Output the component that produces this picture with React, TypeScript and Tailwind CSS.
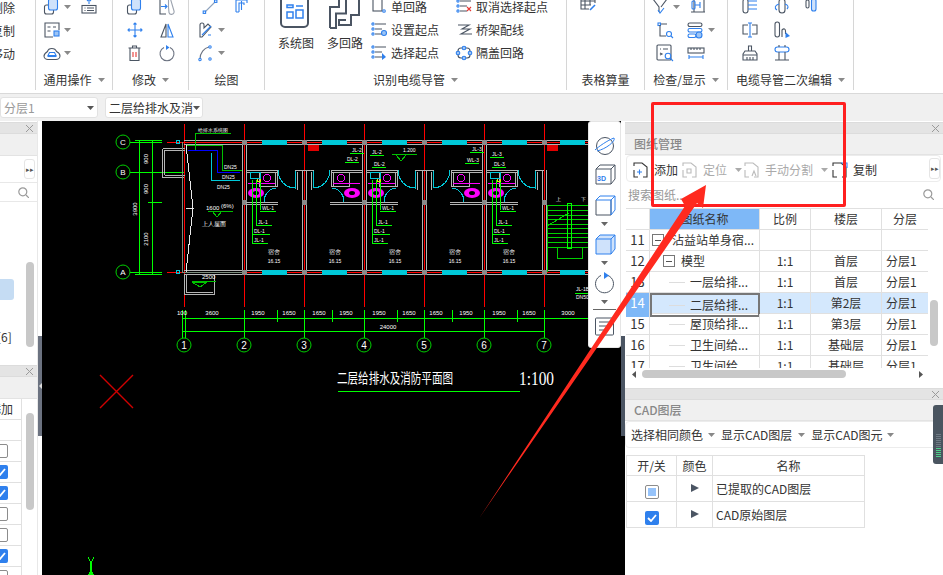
import type { ReactNode } from 'react'

const DARK = '#4b5563'
const BLUE = '#2f80ed'
const GREEN = '#00ff00'
const WALL = '#b4b4b4'
const CYAN = '#00c8d8'
const PINK = '#ff00ff'

function Ic({ w = 18, h = 18, children }: { w?: number; h?: number; children: ReactNode }) {
  return (
    <svg width={w} height={h} viewBox={`0 0 ${w} ${h}`} fill="none" stroke={DARK} strokeWidth={1.1} className="shrink-0">
      {children}
    </svg>
  )
}

function Caret({ color = '#8a8a8a' }: { color?: string }) {
  return (
    <svg width="7" height="4" viewBox="0 0 7 4" className="shrink-0">
      <path d="M0 0h7L3.5 4z" fill={color} />
    </svg>
  )
}

const CopyIcon = () => (
  <Ic>
    <rect x="1.500" y="7" width="9" height="9" rx="2" />
    <rect x="5.500" y="1" width="9" height="11" rx="2" fill="#cfe2fb" stroke={BLUE} />
  </Ic>
)
const UploadIcon = () => (
  <Ic>
    <rect x="2" y="7.500" width="14" height="7.500" />
    <path d="M4.500 10h1M4.500 12.500h1M7 10h7M7 12.500h7" />
    <path d="M9 1v5M7 3l2-2 2 2" stroke={BLUE} />
  </Ic>
)
const FormIcon = () => (
  <Ic>
    <path d="M16 9V2H2v14h8" />
    <path d="M4.500 6h3M10 6h3M4.500 10h3" />
    <rect x="11" y="10" width="5" height="5" fill="#9cc4f5" stroke={BLUE} />
  </Ic>
)
const CloudIcon = () => (
  <Ic>
    <path d="M1 12c0-2 2-3.500 3.500-4.500C5.500 3.500 12 3.500 13.500 7.500c2 1 3.500 2.500 3.500 4.500s-2 3.500-4 3.500H5C3 15.500 1 14 1 12z" />
    <path d="M6.500 8.500h5l1.500 3h-8z" stroke={BLUE} />
    <path d="M4.500 12.500h9" stroke={BLUE} />
  </Ic>
)
const ExportDocIcon = () => (
  <Ic>
    <path d="M9 1H2v15h6" />
    <path d="M3 8.500h6M7 6.500l2 2-2 2" stroke={BLUE} />
    <path d="M10.500 1h2l3.500 12a2.500 2.500 0 0 1-5 1.500L10.500 9z" stroke="#9ca3af" />
  </Ic>
)
const MoveIcon = () => (
  <Ic>
    <path d="M9 3v12M3 9h12M7.500 3.500 9 2l1.500 1.500M7.500 14.500 9 16l1.500-1.500M3.500 7.500 2 9l1.500 1.500M14.500 7.500 16 9l-1.500 1.500" stroke={BLUE} />
  </Ic>
)
const MirrorIcon = () => (
  <Ic>
    <path d="M8 3v13H3z" />
    <path d="M10 3v13h5z" stroke={BLUE} />
  </Ic>
)
const TrashIcon = () => (
  <Ic>
    <path d="M2.500 4h12M6.500 4V2h4v2M4 4v12.500h9V4" />
    <path d="M7 8v5M10 8v5" stroke="#e53935" />
  </Ic>
)
const RotateIcon = () => (
  <Ic>
    <path d="M12 3.500a7 7 0 1 1-6 0" stroke="#6b7280" />
    <path d="M8 1v5l3.500-2.500z" fill={BLUE} stroke="none" />
  </Ic>
)
const LineIcon = () => (
  <Ic>
    <path d="M4 14 14 4" stroke="#8fa3bd" />
    <rect x="2.200" y="13" width="2.400" height="2.400" stroke={BLUE} />
    <rect x="13.500" y="2" width="2.400" height="2.400" stroke={BLUE} />
  </Ic>
)
const PipeIcon = () => (
  <Ic>
    <path d="M3 14V2h11v3M6 14V5h5v2M3 14h3M8.500 12V3" stroke={BLUE} />
  </Ic>
)
const PencilIcon = () => (
  <Ic>
    <path d="M3 4v12h2L14 6 11 3 7 7V4a2 2 0 0 0-4 0z" stroke={DARK} />
    <path d="M5 14 14 5M11 14h3" stroke={BLUE} />
  </Ic>
)
const ArcIcon = () => (
  <Ic>
    <path d="M3 15C3 9 7 4 12 3" stroke="#6b7280" />
    <circle cx="3" cy="15.500" r="1.200" stroke={BLUE} />
    <circle cx="13" cy="3" r="1.200" stroke={BLUE} />
    <circle cx="13" cy="15" r="1.200" stroke={BLUE} />
  </Ic>
)
const LoopIcon = () => (
  <Ic>
    <rect x="3" y="1" width="9" height="12" />
    <circle cx="14" cy="13" r="1.300" stroke={BLUE} />
  </Ic>
)
const ListDotIcon = ({ mark }: { mark: ReactNode }) => (
  <Ic>
    <circle cx="3" cy="3" r="1.100" stroke={BLUE} />
    <circle cx="3" cy="8" r="1.100" stroke={BLUE} />
    <circle cx="3" cy="13" r="1.100" stroke={BLUE} />
    <path d="M5 3h11M5 8h7M5 13h7" />
    {mark}
  </Ic>
)
const CancelIcon = () => <ListDotIcon mark={<path d="m12 9 4 4m0-4-4 4" stroke="#e53935" />} />
const SetIcon = () => <ListDotIcon mark={<circle cx="14" cy="12" r="2.500" fill="#9cc4f5" stroke={BLUE} />} />
const PickIcon = () => <ListDotIcon mark={<path d="M12 9v7l4-3z" fill={BLUE} stroke="none" />} />
const TrayIcon = () => (
  <Ic>
    <path d="M3 4h11l-7 4h8l-9 5h11" />
  </Ic>
)
const RingIcon = () => (
  <Ic>
    <rect x="3" y="4" width="12" height="10" rx="3" />
    <circle cx="3" cy="9" r="1.800" fill="#9cc4f5" stroke={BLUE} />
    <circle cx="15" cy="9" r="1.800" fill="#9cc4f5" stroke={BLUE} />
    <circle cx="9" cy="14" r="1.800" fill="#9cc4f5" stroke={BLUE} />
    <circle cx="9" cy="4" r="1.800" fill="#9cc4f5" stroke={BLUE} />
  </Ic>
)
const TablePenIcon = () => (
  <Ic>
    <path d="M2 1v12h8M2 5h14M2 9h10M6 1v12M11 1v8M16 1v6" />
    <path d="m11 14 5-5" stroke={BLUE} strokeWidth={1.600} />
  </Ic>
)
const FunnelIcon = () => (
  <Ic>
    <path d="M1 1l6 8v5M15 1l-6 8" />
    <path d="m6 12 2 3 4-5" stroke={BLUE} />
  </Ic>
)
const SheetIcon = () => (
  <Ic>
    <path d="M2 14h14M15 14V1M2 14h3V1" />
    <rect x="3" y="3" width="3" height="8" rx="1" stroke={BLUE} />
    <path d="M6 7h5M11 4v6" stroke={BLUE} />
  </Ic>
)
const CornerSearchIcon = () => (
  <Ic>
    <rect x="2" y="2" width="2.500" height="2.500" stroke={BLUE} />
    <path d="M4 4v11h6M5 3h6" />
    <circle cx="13" cy="13" r="2.500" stroke={BLUE} />
    <path d="m15 15 2 2" stroke={BLUE} />
  </Ic>
)
const BarsClockIcon = () => (
  <Ic>
    <rect x="1" y="2" width="14" height="3.500" rx="1.700" />
    <rect x="1" y="7.500" width="14" height="3.500" rx="1.700" stroke={BLUE} />
    <rect x="1" y="13" width="8" height="3.500" rx="1.700" stroke={BLUE} />
    <circle cx="12" cy="14" r="3" fill="#9cc4f5" stroke={BLUE} />
  </Ic>
)
const PanelSearchIcon = () => (
  <Ic>
    <rect x="1" y="1" width="14" height="15" rx="1" />
    <path d="M4 5h1M7 5h5M4 9l2 1-2 1" />
    <circle cx="12" cy="12" r="2.800" fill="#fff" stroke={BLUE} />
    <path d="m14 14 3 3" stroke={BLUE} />
  </Ic>
)
const RulerIcon = () => (
  <Ic>
    <rect x="1" y="4" width="16" height="5" />
    <path d="M4 4v2M7 4v2M10 4v2M13 4v2" />
    <path d="M2 13h14M2 11v4M16 11v4" stroke={BLUE} />
  </Ic>
)
const TubeLinesIcon = () => (
  <Ic>
    <rect x="2" y="1" width="5" height="14" rx="2.500" />
    <path d="M7 3h9M7 7h9M7 11h9" stroke={BLUE} />
  </Ic>
)
const TubeRotateIcon = () => (
  <Ic>
    <rect x="6" y="1" width="6" height="14" rx="3" />
    <path d="M6 6C2 7 1 10 4 12M12 6c3 1 4 3 2 5" stroke={BLUE} />
  </Ic>
)
const TwinBarIcon = () => (
  <Ic w={12}>
    <rect x="1" y="2" width="3" height="8" rx="1.500" />
    <rect x="6.500" y="1" width="4.500" height="12" rx="2" fill="#cfe2fb" stroke={BLUE} />
  </Ic>
)
const CutIcon = () => (
  <Ic>
    <path d="M7 4H2v9h5M11 4h5v9h-5" />
    <path d="M9 2v14M7 2h4M7 16h4" stroke={BLUE} />
  </Ic>
)
const TubeSearchIcon = () => (
  <Ic>
    <rect x="2" y="1" width="4.500" height="15" rx="2.200" />
    <path d="M9 16V9c2-2 3.500-1 3.500 1v3" />
    <path d="M12.500 11v6l4.500-2z" fill={BLUE} stroke="none" />
  </Ic>
)
const BrushIcon = () => (
  <Ic>
    <path d="M7.500 7V2h3v5M2 10l2-3h10l2 3v6H2z" />
    <path d="M2 11h14M6 13v3M9 13v3M12 13v3" />
  </Ic>
)
const BridgeIcon = () => (
  <Ic>
    <rect x="2" y="3" width="14" height="5" rx="2.500" stroke={BLUE} />
    <path d="M2 16h14M6 8v8M12 8v8M6 3V1M12 3V1" />
  </Ic>
)

function Group({ w, label, caret, children }: { w: string; label: string; caret?: boolean; children: ReactNode }) {
  return (
    <div className={`${w} h-[90px] shrink-0 border-r border-[#d6d6d6] flex flex-col`}>
      <div className="h-[75px] -mt-[5px] shrink-0">{children}</div>
      <div className="h-[20px] flex items-center justify-center gap-[6px] text-[12px] text-[#333]">
        <span>{label}</span>
        {caret && <Caret />}
      </div>
    </div>
  )
}

function Cell({ children, caret, x }: { children: ReactNode; caret?: boolean; x: string }) {
  return (
    <div className={`h-[23px] flex items-center gap-[3px] ${x}`}>
      {children}
      {caret && <Caret />}
    </div>
  )
}

function TextRow({ icon, label }: { icon: ReactNode; label: string }) {
  return (
    <div className="h-[23px] flex items-center gap-[3px] text-[12px] text-[#333] whitespace-nowrap">
      {icon}
      <span>{label}</span>
    </div>
  )
}

function Ribbon() {
  return (
    <div className="h-[94px] shrink-0 bg-white border-b border-[#d9d9d9] flex overflow-hidden">
      <div className="w-[36px] h-[90px] shrink-0 border-r border-[#d6d6d6] overflow-hidden">
        <div className="-mt-[5px] -ml-[9px] text-[12px] text-[#333] leading-[25px]">
          <div className="h-[23px]">删除</div>
          <div className="h-[23px]">复制</div>
          <div className="h-[23px]">移动</div>
        </div>
      </div>

      <Group w="w-[77px]" label="通用操作" caret>
        <div className="grid grid-cols-[37px_1fr] pl-[7px]">
          <Cell caret x=""><CopyIcon /></Cell>
          <Cell x=""><UploadIcon /></Cell>
          <Cell caret x=""><FormIcon /></Cell>
          <div />
          <Cell caret x=""><CloudIcon /></Cell>
        </div>
      </Group>

      <Group w="w-[76px]" label="修改" caret>
        <div className="grid grid-cols-[32px_1fr] pl-[13px]">
          <Cell x=""><CopyIcon /></Cell>
          <Cell x=""><ExportDocIcon /></Cell>
          <Cell x=""><MoveIcon /></Cell>
          <Cell x=""><MirrorIcon /></Cell>
          <Cell x=""><TrashIcon /></Cell>
          <Cell x=""><RotateIcon /></Cell>
        </div>
      </Group>

      <Group w="w-[76px]" label="绘图">
        <div className="grid grid-cols-[32px_1fr] pl-[12px]">
          <Cell x=""><LineIcon /></Cell>
          <Cell x=""><PipeIcon /></Cell>
          <Cell caret x="-ml-[4px]"><PencilIcon /></Cell>
          <div />
          <Cell caret x="-ml-[4px]"><ArcIcon /></Cell>
        </div>
      </Group>

      <Group w="w-[302px]" label="识别电缆导管" caret>
        <div className="flex pl-[7px]">
          <div className="w-[48px] shrink-0 flex flex-col items-center text-[12px] text-[#333]">
            <svg width="32" height="34" viewBox="0 0 32 34" fill="none" className="shrink-0">
              <rect x="1" y="-2" width="27" height="34" rx="4" stroke={DARK} strokeWidth="2" />
              <rect x="7" y="10" width="6" height="2.500" stroke={BLUE} strokeWidth="1.500" />
              <rect x="7" y="17" width="6" height="6" stroke={BLUE} strokeWidth="1.500" />
              <path d="M16 11h7" stroke={BLUE} strokeWidth="1.500" />
              <rect x="16" y="15" width="7" height="8" stroke={BLUE} strokeWidth="1.500" />
            </svg>
            <span className="mt-[5px] whitespace-nowrap">系统图</span>
          </div>
          <div className="w-[50px] shrink-0 flex flex-col items-center text-[12px] text-[#333]">
            <svg width="32" height="34" viewBox="0 0 32 34" fill="none" stroke={DARK} strokeWidth="2" className="shrink-0">
              <path d="M1 33V12H10V0M1 33H7V18.500H17V0" />
              <path d="M30 0V20H22V30H10V25H17" />
            </svg>
            <span className="mt-[5px] whitespace-nowrap">多回路</span>
          </div>
          <div className="w-[85px] shrink-0">
            <TextRow icon={<LoopIcon />} label="单回路" />
            <TextRow icon={<SetIcon />} label="设置起点" />
            <TextRow icon={<PickIcon />} label="选择起点" />
          </div>
          <div>
            <TextRow icon={<CancelIcon />} label="取消选择起点" />
            <TextRow icon={<TrayIcon />} label="桥架配线" />
            <TextRow icon={<RingIcon />} label="隔盖回路" />
          </div>
        </div>
      </Group>

      <Group w="w-[78px]" label="表格算量">
        <div className="pl-[12px] pt-[1px]"><TablePenIcon /></div>
      </Group>

      <Group w="w-[83px]" label="检查/显示" caret>
        <div className="grid grid-cols-[37px_1fr] pl-[7px]">
          <Cell caret x=""><FunnelIcon /></Cell>
          <Cell x=""><SheetIcon /></Cell>
          <Cell x="pl-[4px]"><CornerSearchIcon /></Cell>
          <Cell caret x="-ml-[2px]"><BarsClockIcon /></Cell>
          <Cell x="pl-[4px]"><PanelSearchIcon /></Cell>
          <Cell x="-ml-[2px]"><RulerIcon /></Cell>
        </div>
      </Group>

      <Group w="w-[126px]" label="电缆导管二次编辑" caret>
        <div className="grid grid-cols-[32px_32px_1fr] pl-[13px]">
          <Cell x=""><TubeLinesIcon /></Cell>
          <Cell x=""><TubeRotateIcon /></Cell>
          <Cell x=""><TwinBarIcon /></Cell>
          <Cell x=""><CutIcon /></Cell>
          <Cell x=""><TubeSearchIcon /></Cell>
          <div />
          <Cell x=""><BrushIcon /></Cell>
          <Cell x=""><BridgeIcon /></Cell>
        </div>
      </Group>
      <div className="flex-1" />
    </div>
  )
}

function Select({ w, label, muted }: { w: string; label: string; muted?: boolean }) {
  return (
    <div className={`${w} h-[21px] shrink-0 rounded-[3px] bg-white border border-[#e2e2e2] flex items-center justify-between pl-[3px] pr-[3px] text-[12px] ${muted ? 'text-[#999]' : 'text-[#333]'}`}>
      <span className="whitespace-nowrap">{label}</span>
      <Caret color="#555" />
    </div>
  )
}

function CloseStrip() {
  return (
    <div className="h-[12px] bg-[#e4e4e4] border-y border-[#dcdcdc] flex items-center justify-end pr-[4px] shrink-0">
      <svg width="7" height="7" viewBox="0 0 7 7" stroke="#9a9a9a" strokeWidth="1">
        <path d="m0 0 7 7M7 0 0 7" />
      </svg>
    </div>
  )
}

function Search({ className }: { className?: string }) {
  return (
    <svg width="11" height="11" viewBox="0 0 11 11" fill="none" stroke="#9a9a9a" strokeWidth="1.200" className={className}>
      <circle cx="4.800" cy="4.800" r="4" />
      <path d="m8 8 3 3" />
    </svg>
  )
}

function Check({ on }: { on: boolean }) {
  return on ? (
    <div className="w-[14px] h-[14px] rounded-[2px] bg-[#2f80ed] flex items-center justify-center shrink-0">
      <svg width="10" height="8" viewBox="0 0 10 8" fill="none" stroke="#fff" strokeWidth="1.800">
        <path d="m1 4 3 3 5-6" />
      </svg>
    </div>
  ) : (
    <div className="w-[14px] h-[14px] rounded-[2px] bg-white border border-[#8c8c8c] shrink-0" />
  )
}

function LeftPanel() {
  const rows = [false, true, true, false, false, true, false]
  return (
    <div className="w-[38px] shrink-0 bg-white relative overflow-hidden border-r border-[#e8e8e8]">
      <div className="h-[1px] bg-white" />
      <CloseStrip />
      <div className="h-[22px] bg-[#f0f0f0] border-b border-[#e3e3e3]" />
      <div className="h-[26px] flex items-center justify-end pr-[2px]">
        <div className="w-[11px] h-[20px] rounded-[3px] border border-[#e5e5e5] flex items-center justify-center text-[7px] text-[#555]">▸▸</div>
      </div>
      <div className="h-[20px] border-y border-[#e8e8e8] flex items-center justify-end pr-[8px]">
        <Search />
      </div>
      <div className="h-[77px]" />
      <div className="w-[14px] h-[21px] rounded-r-[3px] bg-[#c5dcf3]" />
      <div className="h-[29px]" />
      <div className="text-[12px] text-[#333] leading-[16px] -ml-[3px]">[6]</div>
      <div className="h-[20px]" />
      <CloseStrip />
      <div className="h-[22px] bg-[#f0f0f0] border-b border-[#e3e3e3]" />
      <div className="w-[22px] border-r border-[#e0e0e0]">
        <div className="h-[21px] border-b border-[#e0e0e0] overflow-hidden">
          <div className="-ml-[11px] text-[12px] leading-[20px] text-[#333] whitespace-nowrap">添加</div>
        </div>
        <div className="h-[21px] border-b border-[#e0e0e0]" />
        {rows.map((on, i) => (
          <div key={i} className="h-[21px] border-b border-[#e0e0e0] flex items-center -ml-[6px]">
            <Check on={on} />
          </div>
        ))}
      </div>
      <div className="absolute left-[26px] top-[141px] w-[8px] h-[85px] rounded-[4px] bg-[#c8c8c8]" />
      <div className="absolute left-[26px] top-[292px] w-[8px] h-[97px] rounded-[4px] bg-[#c8c8c8]" />
    </div>
  )
}

const GRID = [184, 244, 304, 364, 424, 484, 544]
const WINDOWS = [262, 322, 382, 442, 502, 560]
const BATHS: [number, boolean][] = [[244, false], [364, true], [364, false], [484, true], [484, false]]
const ROOMS = [274, 335, 395, 455, 509]
const DIMS: [string, number][] = [
  ['100', 182], ['3600', 212], ['1950', 258], ['1650', 289], ['1650', 319], ['1950', 346], ['1950', 379],
  ['1650', 409], ['1650', 436], ['1950', 466], ['1950', 499], ['1650', 529], ['3000', 568],
]
const TICKS = [277, 332, 397, 452, 517]
const TAGS: [number, number, string][] = [
  [350, 153, 'JL-2'], [345, 162, 'DL-2'], [370, 155, 'JL-2'], [372, 167, 'DL-2'],
  [470, 152, 'JL-3'], [465, 163, 'WL-3'], [490, 157, 'JL-3'], [492, 167, 'DL-3'],
]

function Bath({ x, flip }: { x: number; flip: boolean }) {
  return (
    <g transform={`translate(${x} 0) scale(${flip ? -1 : 1} 1)`} fill="none">
      <path d="M2 170h31M2 172h31M2 202h32M2 204h32" stroke={WALL} />
      <path d="M33 170v16h-4M51 188v-18h9M53 190v-18" stroke={WALL} />
      <rect x="15" y="172" width="16" height="14" stroke={WALL} />
      <circle cx="23" cy="178" r="3.500" stroke={PINK} />
      <path d="M4 183h27" stroke={PINK} />
      <ellipse cx="12" cy="193" rx="8" ry="5" fill={PINK} shapeRendering="auto" />
      <ellipse cx="12" cy="193" rx="3" ry="2" fill="#000" shapeRendering="auto" />
      <path d="M34 170a17 18 0 0 0 17 18V171M20 202a13 14 0 0 1 12-14" stroke={CYAN} />
    </g>
  )
}

function Leader({ x, y, w, label }: { x: number; y: number; w: number; label: string }) {
  return (
    <g>
      <path d={`M${x} ${y}h${w}`} stroke={GREEN} />
      <text x={x + 2} y={y - 1} fontSize="5" fill="#fff">{label}</text>
    </g>
  )
}

function CadDrawing() {
  return (
    <svg viewBox="42 121 579 454" width="579" height="454" shapeRendering="crispEdges" className="block bg-black" fontFamily='"Liberation Sans", sans-serif'>
      {/* axis lines */}
      {GRID.map((x) => (
        <path key={x} d={`M${x + 0.5} 124V307`} stroke="#ff0000" />
      ))}
      <path d="M167 142.500H588M167 272.500H588" stroke="#ff0000" />
      <path d="M184 140.500H588M184 144.500H588M184 270.500H588M184 274.500H588" stroke={WALL} />
      {WINDOWS.map((x) => (
        <g key={x}>
          <rect x={x} y="140" width="25" height="5" fill={CYAN} />
          <rect x={x} y="270" width="25" height="5" fill={CYAN} />
        </g>
      ))}
      {GRID.slice(1).map((x) => (
        <g key={x} fill="none">
          <path d={`M${x - 1.5} ${x % 120 === 4 ? 142 : 170}V272M${x + 2.5} ${x % 120 === 4 ? 142 : 170}V272`} stroke={WALL} />
          <rect x={x - 2} y="140" width="5" height="5" fill="#8a8a8a" />
          <rect x={x - 2} y="270" width="5" height="5" fill="#8a8a8a" />
          <rect x={x - 2} y="200" width="5" height="5" fill="#8a8a8a" />
        </g>
      ))}
      <rect x="308" y="145" width="11" height="6" fill="#e00000" />
      <rect x="547" y="145" width="11" height="6" fill="#e00000" />
      {BATHS.map(([x, flip], i) => (
        <Bath key={i} x={x} flip={flip} />
      ))}

      {/* left dimensions and axes */}
      <path d="M130 142.500H162M130 172.500H184M130 272.500H162M135 140.500H162M135 274.500H162M139.500 140V274M152.500 140V274M148 202.500H162" stroke={GREEN} />
      {[['C', 142], ['B', 172], ['A', 272]].map(([t, y]) => (
        <g key={t}>
          <circle cx="123" cy={y} r="7" stroke="#00d000" fill="none" shapeRendering="auto" />
          <text x="123" y={Number(y) + 3} textAnchor="middle" fontSize="8" fill="#fff">{t}</text>
        </g>
      ))}
      <path d="M167 142.500h10M167 272.500h10" stroke="#ff0000" />
      <circle cx="178" cy="142" r="1.800" stroke={CYAN} fill="none" />
      <circle cx="178" cy="272" r="1.800" stroke={CYAN} fill="none" />
      {[[148, 159, '900'], [148, 189, '900'], [148, 239, '2100']].map(([x, y, t]) => (
        <text key={String(y)} transform={`translate(${x} ${y}) rotate(-90)`} textAnchor="middle" fontSize="6" fill="#fff">{t}</text>
      ))}
      <text transform="translate(137 209) rotate(-90)" textAnchor="middle" fontSize="6" fill="#fff">3900</text>

      {/* roof */}
      <path d="M162.500 148.500h22M184 177.500h-22v-29M164.500 150.500h20M164.500 175.500h20M164.500 150v25" stroke={WALL} fill="none" />
      <path d="M186 145 193 208 186 272M186 208.500h8" stroke="#e8e8e8" fill="none" />
      <path d="M182.500 142V272M244 272.500H182" stroke="#7d8c7d" fill="none" />
      <path d="M184.500 274V294.500H214.500V274M186.500 274V292.500H212.500" stroke={WALL} fill="none" />
      <path d="M195.500 150V133.500H231M187 145.500H222.500V170.500H242" stroke="#00c000" fill="none" />
      <path d="M188 150.500H217.500V172.500H240" stroke="#0000ff" fill="none" />
      <path d="M211.500 153V180.500H240" stroke={CYAN} fill="none" />
      <text x="198" y="132" fontSize="5" fill="#fff">给排水系统图</text>
      <text x="224" y="169" fontSize="5" fill="#fff">DN25</text>
      <text x="222" y="179" fontSize="5" fill="#fff">DN25</text>
      <text x="217" y="189" fontSize="5" fill="#fff">DN25</text>
      <path d="M208 211.500h25M212 211l5 6 5-6" stroke="#00c000" fill="none" />
      <text x="206" y="210" fontSize="6" fill="#fff">1600</text>
      <text x="221" y="208" fontSize="6" fill="#fff">(6%)</text>
      <text x="202" y="226" fontSize="6" fill="#fff">上人屋面</text>
      <path d="M192 281.500h24M192 282h15l-7 5z" stroke="#00c000" fill="none" />
      <text x="202" y="279" fontSize="6" fill="#fff">2500</text>

      {/* leaders */}
      {[0, 120, 240].map((dx) => (
        <g key={dx} transform={`translate(${dx} 0)`}>
          <path d="M252.500 180V243M256.500 180V226M260.500 180V210" stroke={GREEN} fill="none" />
          <Leader x={260} y={211} w={16} label="WL-1" />
          <Leader x={256} y={225} w={16} label="JL-1" />
          <Leader x={252} y={234} w={18} label="DL-1" />
          <Leader x={252} y={243} w={16} label="JL-1" />
          <circle cx="259" cy="180" r="2" stroke="#e0e000" fill="none" />
          <path d="M250 172.500h10v6h-10z" stroke={CYAN} fill="none" />
        </g>
      ))}
      {TAGS.map(([x, y, t]) => (
        <Leader key={`${x}-${y}`} x={x} y={y} w={14} label={t} />
      ))}
      <path d="M392 154.500h25M396 155l5 6 5-6" stroke="#00c000" fill="none" />
      <text x="403" y="152" fontSize="5" fill="#fff">1.200</text>

      {ROOMS.map((x) => (
        <g key={x} fill="#fff" textAnchor="middle">
          <text x={x} y="254" fontSize="6">宿舍</text>
          <text x={x} y="263" fontSize="5">16.15</text>
        </g>
      ))}

      {/* stairs */}
      <g stroke="#00d000" fill="none">
        {[205, 210, 215, 219, 224, 228, 233, 237, 242, 247].map((y) => (
          <path key={y} d={`M547 ${y + 0.5}H588`} />
        ))}
        <path d="M547.500 272V205M557.500 247V258.500H582.500V247M547 226 569 213" />
      </g>
      <rect x="567.500" y="203.500" width="4" height="45" fill="none" stroke={GREEN} />
      <text x="556" y="201" fontSize="5" fill="#fff">上</text>
      <text x="581" y="201" fontSize="5" fill="#fff">下</text>
      <path d="M575 293.500h13" stroke={GREEN} />
      <text x="576" y="291" fontSize="5" fill="#fff">JL-1B</text>
      <text x="576" y="299" fontSize="5" fill="#fff">DN50</text>

      {/* bottom dimensions */}
      <path d="M182 318.500H588M182 331.500H545M182.500 310V338M185.500 310V338" stroke={GREEN} fill="none" />
      {GRID.slice(1).map((x) => (
        <path key={x} d={`M${x + 0.5} 310V338`} stroke={GREEN} />
      ))}
      {TICKS.map((x) => (
        <path key={x} d={`M${x + 0.5} 310V322`} stroke={GREEN} />
      ))}
      {DIMS.map(([t, x], i) => (
        <text key={i} x={x} y="315" textAnchor="middle" fontSize="6" fill="#fff">{t}</text>
      ))}
      <text x="388" y="329" textAnchor="middle" fontSize="6" fill="#fff">24000</text>
      {GRID.map((x, i) => (
        <g key={x}>
          <circle cx={x} cy="345" r="7" stroke="#00d000" fill="#000" shapeRendering="auto" />
          <text x={x} y="349" textAnchor="middle" fontSize="10" fill="#fff">{i + 1}</text>
        </g>
      ))}

      {/* title */}
      <text x="337" y="383" fontSize="14" fill="#fff" fontFamily='"Noto Sans CJK SC", sans-serif' textLength="116" lengthAdjust="spacingAndGlyphs">二层给排水及消防平面图</text>
      <text x="519" y="385" fontSize="18" fill="#fff" fontFamily='"Liberation Serif", serif' textLength="35" lengthAdjust="spacingAndGlyphs">1:100</text>
      <path d="M338 391.500H520" stroke={GREEN} />

      <path d="M100 375 133 408M133 375 100 408" stroke="#d00000" strokeWidth="1.400" fill="none" shapeRendering="auto" />
      <path d="M88 557 91 563 94 557M91 563V570" stroke={GREEN} fill="none" strokeWidth="1.200" />
      <path d="M91 569 88 575H94z" fill={GREEN} />
    </svg>
  )
}

function ViewRail() {
  return (
    <div className="absolute right-0 top-0 w-[33px] h-[227px] bg-white rounded-[3px] border border-[#e5e5e5] flex flex-col items-center pt-[13px]">
      <svg width="22" height="22" viewBox="0 0 22 22" fill="none" stroke={DARK}>
        <circle cx="11" cy="11" r="8.500" />
        <path d="M1 15C4 12 14 5 20 3c2 3-8 11-17 13" stroke={BLUE} />
      </svg>
      <svg width="22" height="22" viewBox="0 0 22 22" fill="none" stroke={DARK} className="mt-[6px]">
        <path d="M2 6h15v15H2zM2 6l4-4h15v14l-4 5M17 6l4-4" />
        <text x="3" y="18" fontSize="7" fill={BLUE} stroke="none" fontWeight="bold" fontFamily='"Liberation Sans", sans-serif'>3D</text>
      </svg>
      <svg width="22" height="22" viewBox="0 0 22 22" fill="none" stroke={DARK} className="mt-[9px]">
        <path d="M2 6v15h15V6" />
        <path d="M2 6l4-4h15v14l-4 5V6zM17 6l4-4" stroke={BLUE} />
      </svg>
      <div className="mt-[6px]"><Caret color="#666" /></div>
      <svg width="22" height="22" viewBox="0 0 22 22" fill="#cfe2fb" stroke={BLUE} className="mt-[7px]">
        <path d="M2 6h15v15H2zM2 6l4-4h15v14l-4 5M17 6l4-4" />
      </svg>
      <div className="mt-[6px]"><Caret color="#666" /></div>
      <svg width="22" height="22" viewBox="0 0 22 22" fill="none" stroke={DARK} className="mt-[7px]">
        <path d="M14 3.500A9 9 0 1 1 7 3.500" />
        <path d="M10 0v7l5-3.500z" fill={BLUE} stroke="none" />
      </svg>
      <div className="mt-[6px]"><Caret color="#666" /></div>
      <div className="w-[23px] h-[1px] bg-[#666] mt-[5px]" />
      <svg width="22" height="20" viewBox="0 0 22 20" fill="none" stroke={DARK} className="mt-[7px]">
        <rect x="1.500" y="1" width="18" height="17" rx="1" />
        <path d="M5 5h12M5 9h12M5 13h8" />
      </svg>
    </div>
  )
}

const COLS = 'grid grid-cols-[24px_110px_51px_71px_46px] w-[302px]'

const SHEETS = [
  { n: '11', name: '沾益站单身宿...', ratio: '', floor: '', part: '', depth: 0 },
  { n: '12', name: '模型', ratio: '1:1', floor: '首层', part: '分层1', depth: 1 },
  { n: '13', name: '一层给排...', ratio: '1:1', floor: '首层', part: '分层1', depth: 2 },
  { n: '14', name: '二层给排...', ratio: '1:1', floor: '第2层', part: '分层1', depth: 2 },
  { n: '15', name: '屋顶给排...', ratio: '1:1', floor: '第3层', part: '分层1', depth: 2 },
  { n: '16', name: '卫生间给...', ratio: '1:1', floor: '基础层', part: '分层1', depth: 2 },
  { n: '17', name: '卫生间给...', ratio: '1:1', floor: '基础层', part: '分层1', depth: 2 },
]

function Minus() {
  return (
    <div className="w-[12px] h-[12px] border border-[#777] flex items-center justify-center shrink-0 bg-white">
      <div className="w-[6px] h-[1px] bg-[#555]" />
    </div>
  )
}

function SheetTable() {
  return (
    <div className="h-[160px] overflow-hidden text-[12px] text-[#333] border-t border-[#e0e0e0]">
      <div className={`${COLS} h-[21px] leading-[20px] text-center border-b border-[#e0e0e0]`}>
        <div className="border-r border-[#e0e0e0]" />
        <div className="bg-[#7eb8f7] border-r border-[#e0e0e0]">图纸名称</div>
        <div className="border-r border-[#e0e0e0]">比例</div>
        <div className="border-r border-[#e0e0e0]">楼层</div>
        <div>分层</div>
      </div>
      {SHEETS.map((r) => {
        const active = r.n === '14'
        return (
          <div key={r.n} className={`${COLS} h-[21px] leading-[20px] text-center border-b border-[#e0e0e0] ${active ? 'bg-[#d4e8fd]' : ''}`}>
            <div className={`border-r border-[#e0e0e0] text-[13px] ${active ? 'bg-[#7eb8f7] text-white' : ''}`}>{r.n}</div>
            <div className={`flex items-center text-left whitespace-nowrap ${active ? 'border-2 border-[#777]' : 'border-r border-[#e0e0e0]'}`}>
              {r.depth === 0 && <div className="ml-[2px] mr-[8px]"><Minus /></div>}
              {r.depth === 1 && <div className="ml-[13px] mr-[6px]"><Minus /></div>}
              {r.depth === 2 && <div className={`${active ? 'ml-[17px]' : 'ml-[19px]'} w-[16px] h-[1px] bg-[#ddd] mr-[5px]`} />}
              <span>{r.name}</span>
            </div>
            <div className="border-r border-[#e0e0e0]">{r.ratio}</div>
            <div className="border-r border-[#e0e0e0]">{r.floor}</div>
            <div className="text-left pl-[4px]">{r.part}</div>
          </div>
        )
      })}
    </div>
  )
}

function ToolItem({ icon, label, off, caret }: { icon: ReactNode; label: string; off?: boolean; caret?: boolean }) {
  return (
    <div className={`flex items-center gap-[5px] whitespace-nowrap ${off ? 'text-[#aaa]' : 'text-[#333]'}`}>
      {icon}
      <span>{label}</span>
      {caret && <span className="ml-[3px]"><Caret color={off ? '#aaa' : '#666'} /></span>}
    </div>
  )
}

const frame = (stroke: string, mark: ReactNode) => (
  <svg width="16" height="16" viewBox="0 0 16 16" fill="none" stroke={stroke} strokeWidth="1.100" className="shrink-0">
    <path d="M1 4V1h8l5 4v10h-4M5 15H1V8" />
    {mark}
  </svg>
)

function DrawingPanel() {
  return (
    <div className="h-[262px] shrink-0 flex flex-col relative">
      <div className="h-[1px] bg-white" />
      <CloseStrip />
      <div className="h-[21px] bg-[#f0f0f0] border-b border-[#e3e3e3] pl-[9px] text-[12px] leading-[20px] text-[#888] font-medium">图纸管理</div>
      <div className="h-[27px] ml-[1px] mr-[2px] rounded-[4px] border border-[#ececec] flex items-center pl-[6px] pt-[2px] text-[12px] relative">
        <div className="w-[49px]"><ToolItem icon={frame('#333', <path d="M4 10h5M6.500 7.500v5" stroke={BLUE} />)} label="添加" /></div>
        <div className="w-[62px]"><ToolItem off caret icon={frame('#bbb', <path d="M5 7h4v4H5z" />)} label="定位" /></div>
        <div className="w-[88px]"><ToolItem off caret icon={frame('#bbb', <path d="m8 14 2-5 2 5" />)} label="手动分割" /></div>
        <ToolItem icon={frame('#333', <path d="M9 1h6v5" stroke={BLUE} />)} label="复制" />
        <div className="absolute right-0 top-[2px] w-[11px] h-[21px] rounded-[3px] border border-[#e5e5e5] flex items-center justify-center text-[7px] text-[#555]">▸▸</div>
      </div>
      <div className="h-[26px] flex items-center justify-between pl-[3px] pr-[9px] text-[12px] text-[#999] border-b border-transparent">
        <span>搜索图纸...</span>
        <Search />
      </div>
      <div className="pl-[1px]"><SheetTable /></div>
      <div className="h-[13px] ml-[1px] relative">
        <div className="absolute left-[16px] top-[2px] w-[204px] h-[8px] rounded-[4px] bg-[#c8c8c8]" />
        <svg width="4" height="7" viewBox="0 0 4 7" className="absolute left-[6px] top-[3px]"><path d="M4 0v7L0 3.500z" fill="#555" /></svg>
        <svg width="4" height="7" viewBox="0 0 4 7" className="absolute left-[293px] top-[3px]"><path d="M0 0v7l4-3.500z" fill="#555" /></svg>
      </div>
      <div className="absolute left-[305px] top-[179px] w-[8px] h-[46px] rounded-[4px] bg-[#c8c8c8]" />
    </div>
  )
}

function LayerPanel() {
  return (
    <div className="flex-1 flex flex-col relative min-h-0">
      <CloseStrip />
      <div className="h-[21px] bg-[#f0f0f0] border-b border-[#e3e3e3] pl-[9px] text-[12px] leading-[20px] text-[#888] font-medium">CAD图层</div>
      <div className="h-[27px] rounded-[4px] border border-[#ececec] flex items-center pl-[5px] pt-[1px] text-[12px] text-[#333] whitespace-nowrap shrink-0">
        <span>选择相同颜色</span>
        <span className="ml-[5px] mr-[6px]"><Caret color="#888" /></span>
        <span>显示CAD图层</span>
        <span className="ml-[6px] mr-[6px]"><Caret color="#888" /></span>
        <span>显示CAD图元</span>
        <span className="ml-[5px]"><Caret color="#888" /></span>
      </div>
      <div className="mt-[7px] w-[239px] ml-[1px] text-[12px] text-[#333] border border-[#e0e0e0] shrink-0">
        <div className="grid grid-cols-[50px_36px_1fr] h-[20px] leading-[19px] text-center border-b border-[#e0e0e0]">
          <div className="border-r border-[#e0e0e0]">开/关</div>
          <div className="border-r border-[#e0e0e0]">颜色</div>
          <div>名称</div>
        </div>
        {[
          { name: '已提取的CAD图层', on: false },
          { name: 'CAD原始图层', on: true },
        ].map((r) => (
          <div key={r.name} className="grid grid-cols-[50px_36px_1fr] h-[26px] border-b border-[#e0e0e0] last:border-b-0 last:h-[25px]">
            <div className="border-r border-[#e0e0e0] flex items-center justify-center pt-[7px]">
              {r.on ? (
                <Check on />
              ) : (
                <div className="w-[14px] h-[14px] rounded-[2px] border border-[#8c8c8c] bg-white p-[2px]">
                  <div className="w-full h-full bg-[#96c3fa]" />
                </div>
              )}
            </div>
            <div className="border-r border-[#e0e0e0] flex items-center justify-center pb-[1px]">
              <svg width="8" height="8" viewBox="0 0 8 8"><path d="M0 0v8l8-4z" fill="#4b5563" /></svg>
            </div>
            <div className="pl-[3px] leading-[25px] whitespace-nowrap">{r.name}</div>
          </div>
        ))}
      </div>
      <div className="absolute right-0 top-[17px] w-[10px] h-[59px] rounded-l-[3px] bg-[#4a5560] flex flex-col items-center justify-end gap-[1px] pb-[7px]">
        {['#6f7b85', '#6f7b85', '#6f7b85', '#6f7b85', '#6f7b85', '#6f7b85', '#6f7b85', '#4fd08a', '#4fd08a', '#4fd08a', '#4fd08a', '#4fd08a'].map((c, i) => (
          <div key={i} className="w-[5px] h-[1px]" style={{ background: c }} />
        ))}
      </div>
    </div>
  )
}

export default function App() {
  return (
    <div className="w-[943px] h-[575px] overflow-hidden relative flex flex-col bg-white font-['Noto_Sans_CJK_SC','Liberation_Sans',sans-serif]">
      <Ribbon />
      <div className="h-[27px] shrink-0 bg-[#f0f0f0] flex items-center gap-[7px]">
        <Select w="w-[98px]" label="分层1" muted />
        <Select w="w-[98px]" label="二层给排水及消" />
      </div>
      <div className="flex-1 flex min-h-0">
        <LeftPanel />
        <div className="w-[4px] shrink-0 flex flex-col">
          <div className="h-[215px] bg-white" />
          <div className="h-[100px] bg-[#6b7280] flex items-center justify-center">
            <svg width="3" height="6" viewBox="0 0 3 6"><path d="M3 0v6L0 3z" fill="#ddd" /></svg>
          </div>
          <div className="flex-1 bg-white" />
        </div>
        <div className="w-[579px] shrink-0 relative bg-black overflow-hidden">
          <CadDrawing />
          <ViewRail />
        </div>
        <div className="w-[4px] shrink-0 flex flex-col">
          <div className="h-[215px] bg-white" />
          <div className="h-[100px] bg-[#4b5563]" />
          <div className="flex-1 bg-black" />
        </div>
        <div className="flex-1 flex flex-col bg-white min-w-0">
          <DrawingPanel />
          <div className="h-[5px] bg-white shrink-0" />
          <LayerPanel />
        </div>
      </div>

      {/* red annotation drawn over the screenshot */}
      <div className="absolute left-[651px] top-[102px] w-[195px] h-[105px] border-[3px] border-[#ff1f1f] rounded-[2px]" />
      <svg width="943" height="575" viewBox="0 0 943 575" className="absolute left-0 top-0 pointer-events-none">
        <path d="M480 517 685 206 681 199 706 185 703 208 697 203 480 517z" fill="#ff2a1f" />
      </svg>
    </div>
  )
}
